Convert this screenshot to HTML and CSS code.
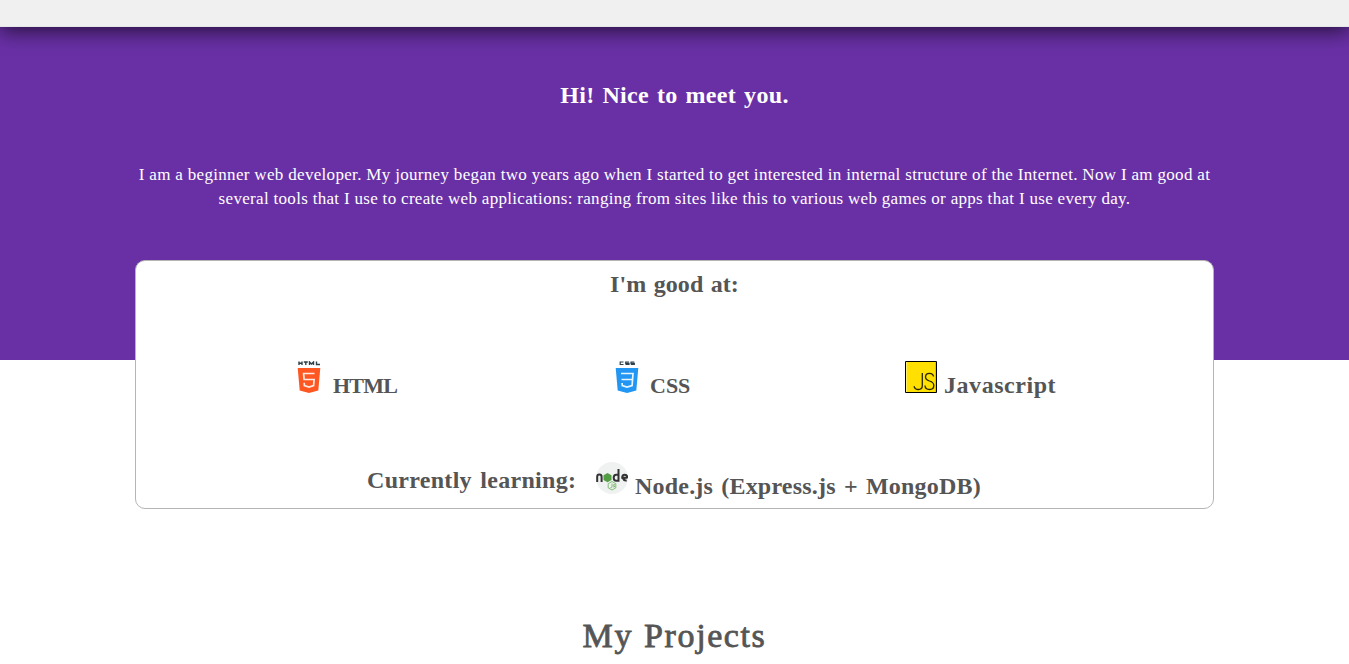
FILE: index.html
```html
<!DOCTYPE html>
<html lang="en">
<head>
<meta charset="utf-8">
<title>Portfolio</title>
<link rel="stylesheet" href="styles.css">
</head>
<body>
<header class="topbar"></header>
<main>
  <section class="about">
    <h2 class="greeting"><span class="t-hi">Hi! Nice to meet you.</span></h2>
    <p class="intro"><span class="t-one">I am a beginner web developer. My journey began two years ago when I started to get interested in internal structure of the Internet. Now I am good at</span><br><span class="t-two">several tools that I use to create web applications: ranging from sites like this to various web games or apps that I use every day.</span></p>
  </section>
  <section class="card">
    <h2 class="card-title"><span class="t-good">I'm good at:</span></h2>
    <div class="skills">
      <div class="skill html">
        <svg class="icon" viewBox="0 0 32 32"><path d="M6 .5V4M9 .5V4M6 2.200h3M10.800 1h4M12.800 1v3M16.500 4V1l2 2 2-2v3M23.500.5v3H27" fill="none" stroke="#2f414b" stroke-width="1.400"/><path d="M4.700 7h22.600l-2 22.500L16 32l-9.300-2.500z" fill="#ff5722"/><path d="M21.500 12.500H10.600l.5 6h10l-.5 6-4.600 1.500-4.600-1.500-.2-2.800" fill="none" stroke="#ffe9e2" stroke-width="1.700"/></svg>
        <h2><span class="t-html">HTML</span></h2>
      </div>
      <div class="skill css">
        <svg class="icon" viewBox="0 0 32 32"><path d="M12.500 1H9.200v2.500h3.300M18 1h-3.300v1.300H18v1.200h-3.500M23.300 1H20v1.300h3.300v1.200h-3.500" fill="none" stroke="#2f414b" stroke-width="1.200"/><path d="M4.700 7h22.600l-2 22.500L16 32l-9.300-2.500z" fill="#2196f3"/><path d="M10 12.500h12l-.9 12-5.100 1.500-4.700-1.500-.2-2.500M10.500 18.500h11" fill="none" stroke="#e7f5ff" stroke-width="1.700"/></svg>
        <h2><span class="t-css">CSS</span></h2>
      </div>
      <div class="skill js">
        <svg class="icon" viewBox="0 0 32 32"><path d="M.5.5h31v31H.5z" fill="#ffe000" stroke="#000"/><path d="M30.500 1v30" stroke="#ffad18"/><path d="M1.500 1v30" stroke="#ffef70"/><path d="M17.300 12v12.500q0 4-4 4-3.300 0-4.300-3.300M28.500 15.500q-.5-3.200-4-3.200-4 0-4 3.700 0 2.600 4 4 4.300 1.300 4.300 4.500 0 4-4.300 4-4.300 0-4.500-4" fill="none" stroke="#292500" stroke-width="1.300"/></svg>
        <h2><span class="t-js">Javascript</span></h2>
      </div>
    </div>
    <div class="learning">
      <h2 class="learning-label"><span class="t-learn">Currently learning:</span></h2>
      <div class="skill">
        <svg class="icon" viewBox="0 0 32 32"><circle cx="16" cy="16" r="16" fill="#f0f1f1"/><path d="M1.200 20v-5.300q0-2.200 2.200-2.200t2.200 2.200V20M22.500 7v11.800h-2.300q-2.500 0-2.500-3t2.500-3h2.300M31.200 15.700h-5q0-3 2.500-3t2.500 2.700l-4.200 1q.8 2.500 3.700 2" fill="none" stroke="#333" stroke-width="2"/><path d="m11.500 11 4 2.300V18l-4 2.300-4-2.300v-4.700z" fill="#539e43"/><path d="m16 19.500 3.800 2.100v4.300L16 28l-3.800-2.100v-4.300zM16 21.500V25q0 1-1.700.8M19 22.700q-1.700-.5-1.700.4t1.500 1q0 1.500-1.700.8" fill="none" stroke="#68ae5b" stroke-width=".8"/></svg>
        <h2><span class="t-node">Node.js (Express.js + MongoDB)</span></h2>
      </div>
    </div>
  </section>
  <h1 class="projects"><span class="t-projects">My Projects</span></h1>
</main>
</body>
</html>
```
FILE: styles.css
```css
* { box-sizing: border-box; }
body { margin: 0; height: 664px; overflow: hidden; background: #fff; color: #555; font-family: "Liberation Serif", serif; }
h1, h2, p { margin: 0; white-space: nowrap; text-align: center; }
h2 { font-size: 24px; line-height: 32px; font-weight: 700; }
.topbar { height: 27px; background: #f0f0f0; border-bottom: 1px solid #e7e7e7; box-shadow: 0 5px 20px rgba(0, 0, 0, .62); position: relative; }
.about { height: 333px; padding-top: 52px; background: #6930a6; color: #fff; }
.intro { margin-top: 52px; font-size: 17px; line-height: 24px; }
.t-hi { letter-spacing: .35px; word-spacing: 1.5px; }
.t-one { letter-spacing: .32px; }
.t-two { letter-spacing: .31px; }
.t-good { letter-spacing: .1px; word-spacing: 1.2px; }
.t-html { font-size: 22px; letter-spacing: -.8px; padding-left: 1px; }
.t-css { font-size: 22px; }
.t-js { letter-spacing: .55px; }
.t-learn { letter-spacing: .3px; word-spacing: 2px; }
.t-node { letter-spacing: .2px; word-spacing: 2px; }
.t-projects { letter-spacing: 1.6px; word-spacing: 1px; }
.card { width: 1079px; height: 249px; margin: -100px auto 0; position: relative; background: #fff; border: 1px solid #b5b5b5; border-radius: 10px; padding-top: 7px; }
.skills { display: flex; margin-top: 61px; height: 40px; }
.skill { display: flex; align-items: flex-start; }
.skill h2 { padding-top: 8px; }
.icon { width: 32px; height: 32px; flex: none; margin-right: 7px; }
.html { width: 318px; margin-left: 157px; }
.css { width: 294px; }
.learning { display: flex; margin: 61px 0 0 231px; }
.learning-label { width: 229px; padding-top: 2px; text-align: left; }
.projects { margin-top: 107px; font-size: 34px; line-height: 40px; font-weight: 400; -webkit-text-stroke: .8px #555; }
```
